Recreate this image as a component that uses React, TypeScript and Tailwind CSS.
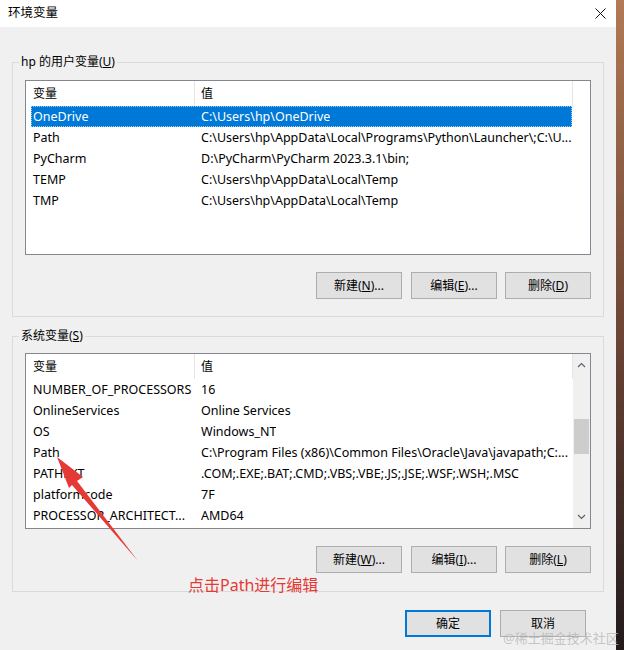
import React from "react";

type Row = { name: string; value: string };

const userVars: Row[] = [
  { name: "OneDrive", value: "C:\\Users\\hp\\OneDrive" },
  { name: "Path", value: "C:\\Users\\hp\\AppData\\Local\\Programs\\Python\\Launcher\\;C:\\U..." },
  { name: "PyCharm", value: "D:\\PyCharm\\PyCharm 2023.3.1\\bin;" },
  { name: "TEMP", value: "C:\\Users\\hp\\AppData\\Local\\Temp" },
  { name: "TMP", value: "C:\\Users\\hp\\AppData\\Local\\Temp" },
];

const sysVars: Row[] = [
  { name: "NUMBER_OF_PROCESSORS", value: "16" },
  { name: "OnlineServices", value: "Online Services" },
  { name: "OS", value: "Windows_NT" },
  { name: "Path", value: "C:\\Program Files (x86)\\Common Files\\Oracle\\Java\\javapath;C:..." },
  { name: "PATHEXT", value: ".COM;.EXE;.BAT;.CMD;.VBS;.VBE;.JS;.JSE;.WSF;.WSH;.MSC" },
  { name: "platformcode", value: "7F" },
  { name: "PROCESSOR_ARCHITECT...", value: "AMD64" },
];

function Btn({ children, primary }: { children: React.ReactNode; primary?: boolean }) {
  return (
    <div
      className={`w-[86px] h-[27px] flex items-center justify-center bg-[#e1e1e1] text-[#000] ${
        primary ? "border-2 border-[#0078d7]" : "border border-[#adadad]"
      }`}
    >
      {children}
    </div>
  );
}

function Header() {
  return (
    <div className="flex h-[25px] shrink-0">
      <div className="w-[169px] border-r border-[#e5e5e5] pl-[7px] flex items-center">变量</div>
      <div className="w-[378px] border-r border-[#e5e5e5] pl-[6px] flex items-center">值</div>
    </div>
  );
}

function Rows({ rows, selected }: { rows: Row[]; selected?: number }) {
  return (
    <div className="flex flex-col text-[12.5px]">
      {rows.map((r, i) => (
        <div
          key={r.name}
          className={`ml-[5px] w-[541px] h-[21px] pt-[2px] flex items-center whitespace-nowrap overflow-hidden ${
            i === selected
              ? "bg-[#0078d7] text-white outline-1 outline-dotted outline-[#9fcdf2] -outline-offset-1"
              : ""
          }`}
        >
          <div className="w-[170px] pl-[2px] shrink-0">{r.name}</div>
          <div className="overflow-hidden">{r.value}</div>
        </div>
      ))}
    </div>
  );
}

function ScrollBar() {
  return (
    <div className="w-[17px] bg-[#f0f0f0] flex flex-col items-center">
      <div className="h-[22px] flex items-center justify-center">
        <svg width="9" height="6" viewBox="0 0 9 6">
          <polyline points="1,5 4.5,1.5 8,5" fill="none" stroke="#606060" strokeWidth="1.2" />
        </svg>
      </div>
      <div className="h-[43px]" />
      <div className="w-[15px] h-[35px] bg-[#cdcdcd]" />
      <div className="flex-1" />
      <div className="h-[22px] flex items-center justify-center">
        <svg width="9" height="6" viewBox="0 0 9 6">
          <polyline points="1,1 4.5,4.5 8,1" fill="none" stroke="#606060" strokeWidth="1.2" />
        </svg>
      </div>
    </div>
  );
}

function Group({ label, children, className }: { label: React.ReactNode; children: React.ReactNode; className: string }) {
  return (
    <fieldset className={`ml-[12px] mr-[12px] border border-[#dadada] ${className}`}>
      <legend className="ml-[6px] px-[2px] leading-[16px]">{label}</legend>
      <div className="px-[12px]">{children}</div>
    </fieldset>
  );
}

export default function App() {
  return (
    <div className="w-[624px] h-[650px] flex overflow-hidden text-[12px] text-black font-['Microsoft_YaHei_UI','Noto_Sans','Noto_Sans_CJK_SC',sans-serif] relative">
      <div className="w-[616px] h-full flex flex-col bg-[#f0f0f0]">
        {/* title bar */}
        <div className="h-[27px] bg-white flex items-center justify-between pl-[8px] pr-[10px] shrink-0">
          <span className="text-[12.5px]">环境变量</span>
          <svg width="11" height="11" viewBox="0 0 11 11">
            <path d="M0.5 0.5 L10.5 10.5 M10.5 0.5 L0.5 10.5" stroke="#111" strokeWidth="1" />
          </svg>
        </div>

        <Group
          className="mt-[27px] pt-[10px] pb-[17px]"
          label={
            <>
              hp 的用户变量(<u>U</u>)
            </>
          }
        >
          <div className="h-[175px] border border-[#828790] bg-white flex flex-col">
            <Header />
            <Rows rows={userVars} selected={0} />
          </div>
          <div className="mt-[17px] flex justify-end gap-[8px]">
            <div className="mr-px">
              <Btn>
                新建(<u>N</u>)...
              </Btn>
            </div>
            <Btn>
              编辑(<u>E</u>)...
            </Btn>
            <Btn>
              删除(<u>D</u>)
            </Btn>
          </div>
        </Group>

        <Group
          className="mt-[11px] pt-[9px] pb-[18px]"
          label={
            <>
              系统变量(<u>S</u>)
            </>
          }
        >
          <div className="h-[176px] border border-[#828790] bg-white flex">
            <div className="flex-1 flex flex-col">
              <Header />
              <Rows rows={sysVars} />
            </div>
            <ScrollBar />
          </div>
          <div className="mt-[17px] flex justify-end gap-[8px]">
            <div className="mr-px">
              <Btn>
                新建(<u>W</u>)...
              </Btn>
            </div>
            <Btn>
              编辑(<u>I</u>)...
            </Btn>
            <Btn>
              删除(<u>L</u>)
            </Btn>
          </div>
        </Group>

        <div className="mt-[18px] flex justify-end gap-[9px] mr-[30px]">
          <Btn primary>确定</Btn>
          <Btn>取消</Btn>
        </div>
      </div>

      {/* desktop wallpaper edge */}
      <div className="w-[8px] h-full bg-gradient-to-b from-[#b27a55] via-[#6e4636] to-[#231a1c]" />

      {/* annotation overlay */}
      <svg className="absolute left-0 top-0 pointer-events-none" width="624" height="650">
        <polygon points="57,457 83,477 77,481 138,561 72,485 69,488" fill="#e53935" />
      </svg>
      <div className="absolute left-[188px] top-[575px] text-[16px] leading-[20px] text-[#e53935]">
        点击Path进行编辑
      </div>
      <div className="absolute left-[503px] top-[629px] text-[13px] leading-[18px] text-[#b8b8b8]/80">
        @稀土掘金技术社区
      </div>
    </div>
  );
}
